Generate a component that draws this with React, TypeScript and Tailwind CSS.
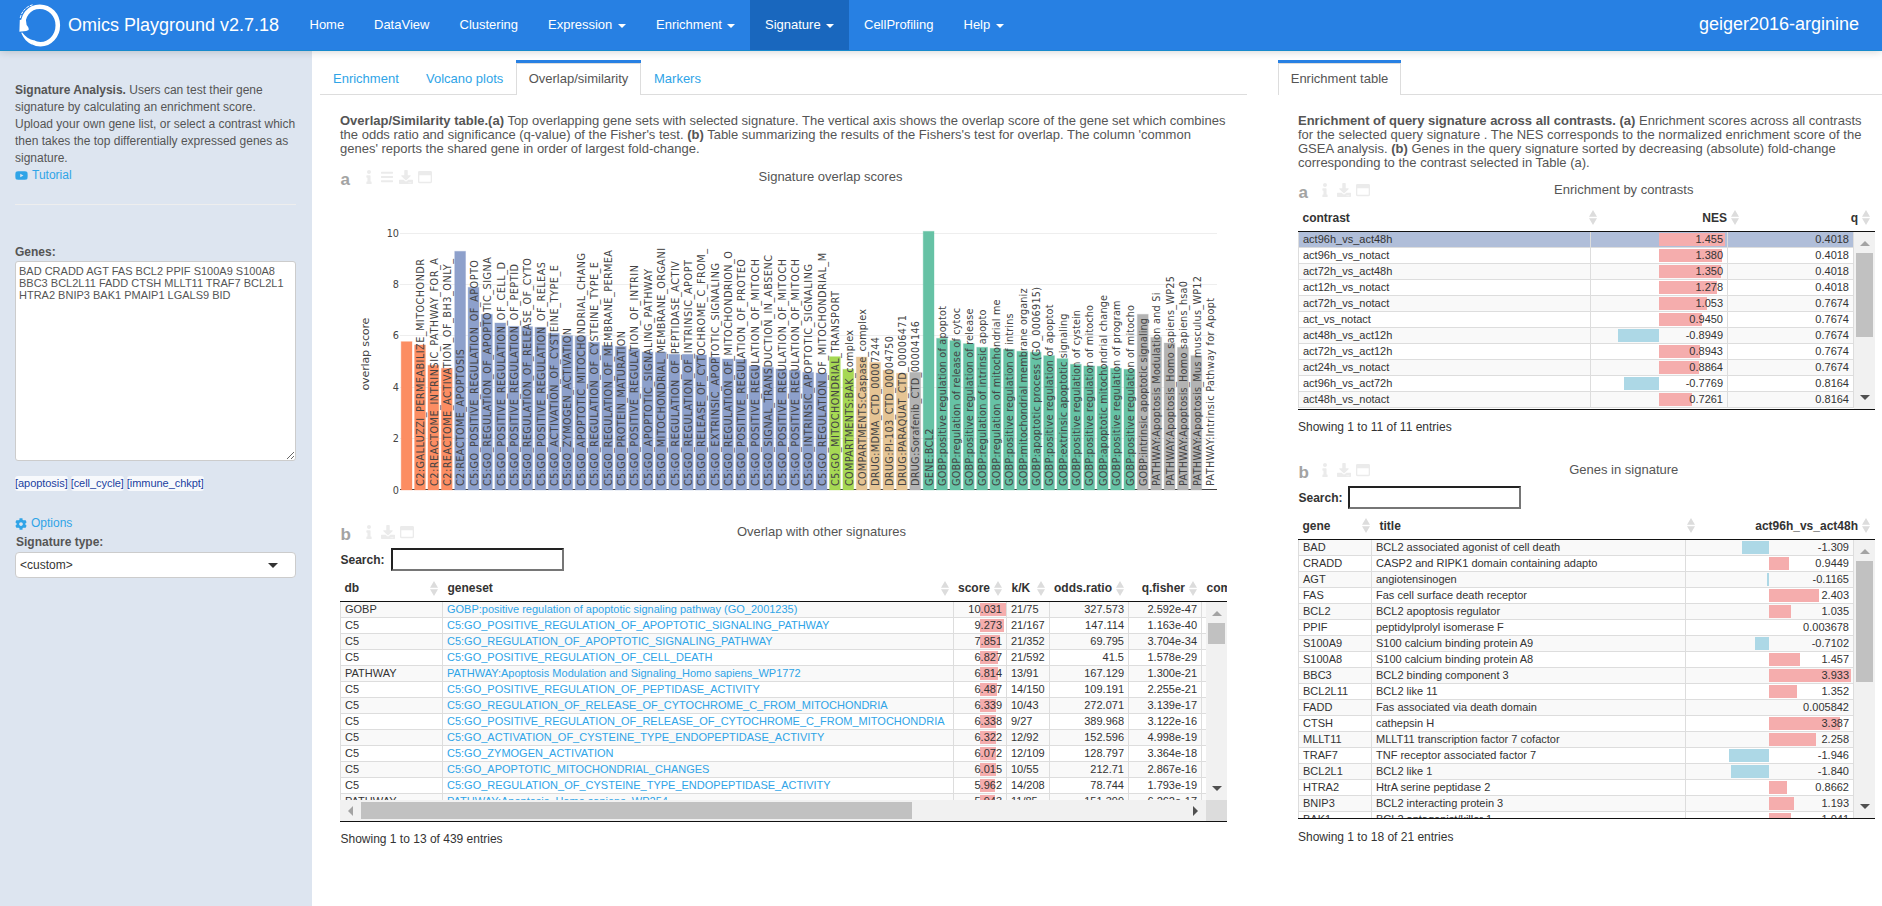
import React from "react";
import { FaBars, FaCog, FaDownload, FaInfo, FaRegWindowMaximize, FaYoutube } from "react-icons/fa";

/* ---------- navigation ---------- */

type NavItem = { label: string; width: string; caret?: boolean; active?: boolean };

const NAV: NavItem[] = [
  { label: "Home", width: "w-[64.5px]" },
  { label: "DataView", width: "w-[85.5px]" },
  { label: "Clustering", width: "w-[88.5px]" },
  { label: "Expression", width: "w-[108px]", caret: true },
  { label: "Enrichment", width: "w-[109px]", caret: true },
  { label: "Signature", width: "w-[99px]", caret: true, active: true },
  { label: "CellProfiling", width: "w-[99.5px]" },
  { label: "Help", width: "w-[70px]", caret: true },
];

function Caret({ className }: { className?: string }) {
  return (
    <svg width="8" height="4" viewBox="0 0 8 4" className={className}>
      <path d="M0 0h8L4 4z" fill="currentColor" />
    </svg>
  );
}

function Logo() {
  return (
    <svg width="43" height="43" viewBox="0 0 43 43" className="shrink-0 text-white">
      <path
        d="M4.500 24C2.500 12 10 2.700 20.800 2.700C31 2.700 38.800 11 38.800 21.300C38.800 32 31 40.200 21.500 40.200C18.500 40.200 16 39.500 13.800 38.300"
        fill="none"
        stroke="currentColor"
        strokeWidth="4.600"
      />
      <path d="M.8 16L.4 27.800C3 27.300 6.500 27.600 9.600 26C10.200 24.500 9 22.500 7.600 21L6.800 15z" fill="currentColor" />
      <path d="M2.200 28.800C4.500 34.500 8.500 39 13 40.600L15.500 36.500C10.500 35.500 6 32.500 3.200 28.500z" fill="currentColor" />
      <path d="M1.200 14C2.600 7 8 1.800 14.500.6" fill="none" stroke="currentColor" strokeWidth="1" strokeDasharray="3 1" />
    </svg>
  );
}

function TopBar() {
  return (
    <header className="relative z-10 flex h-[51px] items-stretch border-b border-[#178acc] bg-[#2780e3] text-white shadow-[0_0_9px_rgba(0,0,0,0.2)]">
      <div className="flex w-[294.500px] items-center pl-[19px] text-[18px]">
        <Logo />
        <span className="ml-[6px]">Omics Playground v2.7.18</span>
      </div>
      <nav className="flex text-[13px]">
        {NAV.map((n) => (
          <a
            key={n.label}
            className={`flex shrink-0 items-center justify-between px-[15px] pb-px ${n.width} ${n.active ? "bg-[#1967be]" : ""}`}
          >
            {n.label}
            {n.caret && <Caret className="mt-[2px]" />}
          </a>
        ))}
      </nav>
      <div className="ml-auto flex items-center pr-[23px] pb-[2px] text-[18px]">geiger2016-arginine</div>
    </header>
  );
}

/* ---------- sidebar ---------- */

function Sidebar() {
  return (
    <aside className="flex w-[312px] shrink-0 flex-col bg-[#dde5f0] px-[15px] pt-[31px] text-[12px] leading-[17px] text-[#555]">
      <p className="h-[85px] w-[281px]">
        <b>Signature Analysis.</b> Users can test their gene signature by calculating an enrichment score. Upload your
        own gene list, or select a contrast which then takes the top differentially expressed genes as signature.
      </p>
      <a className="flex items-center gap-[4px] text-[#2fa4e7]">
        <FaYoutube size={13} />
        Tutorial
      </a>
      <hr className="mt-[20px] w-[281px] border-[#eee]" />
      <label className="mt-[38px] block h-[18px] font-bold leading-[18px]">Genes:</label>
      <textarea
        readOnly
        className="block h-[200px] w-[281px] resize rounded-[3px] border border-[#ccc] bg-white px-[3px] py-[3px] text-[11px] leading-[12px] text-[#555] outline-none"
        value="BAD CRADD AGT FAS BCL2 PPIF S100A9 S100A8 BBC3 BCL2L11 FADD CTSH MLLT11 TRAF7 BCL2L1 HTRA2 BNIP3 BAK1 PMAIP1 LGALS9 BID"
      />
      <div className="mt-[15px] flex gap-[3px] text-[11px] leading-[15px] text-[#1a3fa0]">
        {["[apoptosis]", "[cell_cycle]", "[immune_chkpt]"].map((t) => (
          <a key={t} className="rounded-[3px] bg-[#f7f9fc] tracking-[-0.05px]">
            {t}
          </a>
        ))}
      </div>
      <a className="mt-[24px] flex items-center gap-[4px] text-[#2fa4e7]">
        <FaCog size={12} />
        Options
      </a>
      <label className="block h-[20px] pl-px font-bold leading-[20px]">Signature type:</label>
      <div className="flex h-[26px] w-[281px] items-center justify-between rounded-[4px] border border-[#ccc] bg-white pr-[17px] pl-[4px] text-[#333]">
        {"<custom>"}
        <svg width="10" height="5" viewBox="0 0 10 5">
          <path d="M0 0h10L5 5z" fill="#333" />
        </svg>
      </div>
    </aside>
  );
}

/* ---------- shared pieces ---------- */

function PanelBar({ letter, title, menu, narrow }: { letter: string; title: string; menu?: boolean; narrow?: boolean }) {
  return (
    <div className="flex h-[28px] items-center">
      <span className={`pt-[6px] pl-[0.500px] text-[17px] font-bold leading-[20px] text-[#a3a3a3] ${narrow ? "w-[24px]" : "w-[25.500px]"}`}>
        {letter}
      </span>
      <div className="flex items-center text-[#ebebeb]">
        <span className="w-[15px]">
          <FaInfo size={14} className="w-[6px]" />
        </span>
        {menu && (
          <span className="w-[18px]">
            <FaBars size={14} className="w-[12px]" />
          </span>
        )}
        <span className="w-[19px]">
          <FaDownload size={14} />
        </span>
        <FaRegWindowMaximize size={14} />
      </div>
      <h3 className="flex-1 pl-[2.500px] text-center text-[13px] text-[#555]">{title}</h3>
    </div>
  );
}

function Search({ narrow }: { narrow?: boolean }) {
  return (
    <label className="flex h-[23px] items-center text-[12px] font-bold text-[#333]">
      <span className={`pl-[0.500px] ${narrow ? "w-[50px]" : "w-[51px]"}`}>Search:</span>
      <span className="block h-[23px] w-[173px] border-2 border-t-[#222] border-r-[#767676] border-b-[#767676] border-l-[#222] bg-white" />
    </label>
  );
}

function Sorter() {
  return (
    <svg width="8" height="15" viewBox="0 0 8 15" className="shrink-0">
      <path d="M4 0l4 6.700H0zM4 15L0 8.300h8z" fill="#dcdcdc" />
    </svg>
  );
}

function Th({ label, width, right, sort = true }: { label: string; width: string; right?: boolean; sort?: boolean }) {
  return (
    <div
      className={`flex shrink-0 items-center ${right ? "" : "pl-[4.500px]"} ${sort ? "pr-[5.500px]" : ""} ${width} ${right ? "justify-end gap-[3.500px]" : "justify-between"}`}
    >
      {label}
      {sort && <Sorter />}
    </div>
  );
}

function VScroll({ thumb, corner }: { thumb: string; corner?: boolean }) {
  return (
    <div className={`flex w-[21px] shrink-0 flex-col items-center bg-[#f1f1f1] ${corner ? "h-[198px]" : "h-full"}`}>
      <svg width="10" height="5" viewBox="0 0 10 5" className="mt-[9px] shrink-0">
        <path d="M0 5h10L5 0z" fill="#a3a3a3" />
      </svg>
      <div className={`mt-[7px] w-[17px] shrink-0 bg-[#c1c1c1] ${thumb}`} />
      <svg width="10" height="5" viewBox="0 0 10 5" className="mt-auto mb-[9px] shrink-0">
        <path d="M0 0h10L5 5z" fill="#505050" />
      </svg>
    </div>
  );
}

const PINK = "#f5adad";
const BLUE = "#add8e6";

function Bar({ value, half, scale }: { value: number; half: number; scale: number }) {
  const len = Math.abs(value) * scale;
  const neg = value < 0;
  return (
    <span
      className="absolute top-px h-[13px]"
      style={{ left: neg ? half - len : half, width: len, background: neg ? BLUE : PINK }}
    />
  );
}

const CELL = "relative h-full shrink-0 overflow-hidden border-r border-[#ddd] px-[4px] whitespace-nowrap";

/* ---------- bar chart ---------- */

type ChartBar = { h: number; c: string };
const OR = "#fc8d62";
const BL = "#8da0cb";
const GN = "#a6d854";
const TN = "#e5c494";
const GY = "#b3b3b3";
const TL = "#66c2a5";

const group = (c: string, tops: number[]): ChartBar[] => tops.map((t) => ({ h: (990 - t) / 3, c }));

const BARS: ChartBar[] = [
  ...group(OR, [545, 555, 616, 625]),
  ...group(BL, [274, 382, 463, 489, 499, 500, 502, 520, 527, 529, 547, 557, 559, 568]),
  ...group(BL, [576, 577, 583, 583, 585, 592, 597, 598, 618, 622, 627, 631, 637, 639]),
  ...group(GN, [590, 628]),
  ...group(TN, [591, 607, 631, 640]),
  ...group(GY, [637]),
  ...group(TL, [214, 535, 542, 551, 562, 565, 568, 574, 577, 587, 596, 613, 618, 619, 625, 628]),
  ...group(GY, [463, 532, 549, 562, 587]),
];

const LABELS: [string, number][] = [
  ["C2:GALLUZZI_PERMEABILIZE_MITOCHONDR", 227],
  ["C2:REACTOME_INTRINSIC_PATHWAY_FOR_A", 228],
  ["C2:REACTOME_ACTIVATION_OF_BH3_ONLY_", 227],
  ["C2:REACTOME_APOPTOSIS", 137],
  ["C5:GO_POSITIVE_REGULATION_OF_APOPTO", 226],
  ["C5:GO_REGULATION_OF_APOPTOTIC_SIGNA", 229],
  ["C5:GO_POSITIVE_REGULATION_OF_CELL_D", 224],
  ["C5:GO_POSITIVE_REGULATION_OF_PEPTID", 222],
  ["C5:GO_REGULATION_OF_RELEASE_OF_CYTO", 228],
  ["C5:GO_POSITIVE_REGULATION_OF_RELEAS", 224],
  ["C5:GO_ACTIVATION_OF_CYSTEINE_TYPE_E", 221],
  ["C5:GO_ZYMOGEN_ACTIVATION", 158],
  ["C5:GO_APOPTOTIC_MITOCHONDRIAL_CHANG", 233],
  ["C5:GO_REGULATION_OF_CYSTEINE_TYPE_E", 224],
  ["C5:GO_REGULATION_OF_MEMBRANE_PERMEA", 236],
  ["C5:GO_PROTEIN_MATURATION", 155],
  ["C5:GO_POSITIVE_REGULATION_OF_INTRIN", 221],
  ["C5:GO_APOPTOTIC_SIGNALING_PATHWAY", 217],
  ["C5:GO_MITOCHONDRIAL_MEMBRANE_ORGANI", 238],
  ["C5:GO_REGULATION_OF_PEPTIDASE_ACTIV", 225],
  ["C5:GO_REGULATION_OF_INTRINSIC_APOPT", 226],
  ["C5:GO_RELEASE_OF_CYTOCHROME_C_FROM_", 237],
  ["C5:GO_EXTRINSIC_APOPTOTIC_SIGNALING", 223],
  ["C5:GO_REGULATION_OF_MITOCHONDRION_O", 235],
  ["C5:GO_POSITIVE_REGULATION_OF_PROTEO", 227],
  ["C5:GO_POSITIVE_REGULATION_OF_MITOCH", 227],
  ["C5:GO_SIGNAL_TRANSDUCTION_IN_ABSENC", 231],
  ["C5:GO_POSITIVE_REGULATION_OF_MITOCH", 227],
  ["C5:GO_POSITIVE_REGULATION_OF_MITOCH", 227],
  ["C5:GO_INTRINSIC_APOPTOTIC_SIGNALING", 222],
  ["C5:GO_REGULATION_OF_MITOCHONDRIAL_M", 233],
  ["C5:GO_MITOCHONDRIAL_TRANSPORT", 195],
  ["COMPARTMENTS:BAK_complex", 156],
  ["COMPARTMENTS:Caspase_complex", 177],
  ["DRUG:MDMA_CTD_00007244", 149],
  ["DRUG:PI-103_CTD_00004750", 150],
  ["DRUG:PARAQUAT_CTD_00006471", 171],
  ["DRUG:Sorafenib_CTD_00004146", 165],
  ["GENE:BCL2", 57.5],
  ["GOBP:positive regulation of apoptot", 180],
  ["GOBP:regulation of release of cytoc", 178],
  ["GOBP:positive regulation of release", 177.5],
  ["GOBP:regulation of intrinsic apopto", 176.5],
  ["GOBP:regulation of mitochondrial me", 186.5],
  ["GOBP:positive regulation of intrins", 172.5],
  ["GOBP:mitochondrial membrane organiz", 197.5],
  ["GOBP:apoptotic process (GO_0006915)", 199],
  ["GOBP:positive regulation of apoptot", 181.5],
  ["GOBP:extrinsic apoptotic signaling", 172.5],
  ["GOBP:positive regulation of cystein", 176],
  ["GOBP:positive regulation of mitocho", 181],
  ["GOBP:apoptotic mitochondrial change", 191],
  ["GOBP:positive regulation of program", 185.5],
  ["GOBP:positive regulation of mitocho", 181],
  ["GOBP:intrinsic apoptotic signaling", 168],
  ["PATHWAY:Apoptosis Modulation and Si", 193.5],
  ["PATHWAY:Apoptosis_Homo sapiens_WP25", 210],
  ["PATHWAY:Apoptosis_Homo sapiens_hsa0", 205],
  ["PATHWAY:Apoptosis_Mus musculus_WP12", 210],
  ["PATHWAY:Intrinsic Pathway for Apopt", 188],
];

const PITCH = 13.385;
const BASE = 490;

function OverlapChart() {
  return (
    <svg width="887" height="327" viewBox="340 191 887 327" className="block" fontFamily='"DejaVu Sans", sans-serif' fill="#444">
      {[2, 4, 6, 8, 10].map((v) => (
        <line key={v} x1="400" x2="1217" y1={Math.round(489.5 - v * 25.7) + 0.5} y2={Math.round(489.5 - v * 25.7) + 0.5} stroke="#eee" />
      ))}
      <line x1="400" x2="1217" y1="489.500" y2="489.500" stroke="#444" />
      {BARS.map((b, i) => (
        <rect key={i} x={401.2 + i * PITCH} y={BASE - b.h} width="10.800" height={b.h} fill={b.c} stroke={b.c} strokeOpacity="0.350" />
      ))}
      {LABELS.map(([t, len], i) => (
        <text
          key={i}
          transform={`translate(${424.2 + i * PITCH} 486) rotate(-90)`}
          fontSize="9.700"
          textLength={len}
          lengthAdjust="spacing"
        >
          {t}
        </text>
      ))}
      {[0, 2, 4, 6, 8, 10].map((v) => (
        <text key={v} x="399" y={493.5 - v * 25.7} fontSize="9.700" textAnchor="end">
          {v}
        </text>
      ))}
      <text transform="translate(368.500 390.500) rotate(-90)" fontSize="11.200" textLength="73" lengthAdjust="spacing">
        overlap score
      </text>
    </svg>
  );
}

/* ---------- left table ---------- */

const SETS: [string, string, number, string, string, string][] = [
  ["GOBP", "GOBP:positive regulation of apoptotic signaling pathway (GO_2001235)", 10.031, "21/75", "327.573", "2.592e-47"],
  ["C5", "C5:GO_POSITIVE_REGULATION_OF_APOPTOTIC_SIGNALING_PATHWAY", 9.273, "21/167", "147.114", "1.163e-40"],
  ["C5", "C5:GO_REGULATION_OF_APOPTOTIC_SIGNALING_PATHWAY", 7.851, "21/352", "69.795", "3.704e-34"],
  ["C5", "C5:GO_POSITIVE_REGULATION_OF_CELL_DEATH", 6.827, "21/592", "41.5", "1.578e-29"],
  ["PATHWAY", "PATHWAY:Apoptosis Modulation and Signaling_Homo sapiens_WP1772", 6.814, "13/91", "167.129", "1.300e-21"],
  ["C5", "C5:GO_POSITIVE_REGULATION_OF_PEPTIDASE_ACTIVITY", 6.487, "14/150", "109.191", "2.255e-21"],
  ["C5", "C5:GO_REGULATION_OF_RELEASE_OF_CYTOCHROME_C_FROM_MITOCHONDRIA", 6.339, "10/43", "272.071", "3.139e-17"],
  ["C5", "C5:GO_POSITIVE_REGULATION_OF_RELEASE_OF_CYTOCHROME_C_FROM_MITOCHONDRIA", 6.338, "9/27", "389.968", "3.122e-16"],
  ["C5", "C5:GO_ACTIVATION_OF_CYSTEINE_TYPE_ENDOPEPTIDASE_ACTIVITY", 6.322, "12/92", "152.596", "4.998e-19"],
  ["C5", "C5:GO_ZYMOGEN_ACTIVATION", 6.072, "12/109", "128.797", "3.364e-18"],
  ["C5", "C5:GO_APOPTOTIC_MITOCHONDRIAL_CHANGES", 6.015, "10/55", "212.71", "2.867e-16"],
  ["C5", "C5:GO_REGULATION_OF_CYSTEINE_TYPE_ENDOPEPTIDASE_ACTIVITY", 5.962, "14/208", "78.744", "1.793e-19"],
  ["PATHWAY", "PATHWAY:Apoptosis_Homo sapiens_WP254", 5.943, "11/85", "151.399", "6.262e-17"],
];

function OverlapTable() {
  return (
    <div className="w-[887px] text-[#333]">
      <div className="flex h-[31px] overflow-hidden border-b border-[#111] pt-[4px] text-[12px] font-bold">
        <Th label="db" width="w-[103px]" />
        <Th label="geneset" width="w-[511px]" />
        <Th label="score" width="w-[53px]" right />
        <Th label="k/K" width="w-[43px]" />
        <Th label="odds.ratio" width="w-[79px]" right />
        <Th label="q.fisher" width="w-[73px]" right />
        <Th label="common.genes" width="w-[90px]" sort={false} />
      </div>
      <div className="flex h-[198px] overflow-hidden">
        <div className="w-[866px] overflow-hidden border-l border-[#ddd] text-[11px] leading-[15px]">
          {SETS.map((r, i) => (
            <div key={i} className={`flex h-[16px] border-b border-[#ddd] ${i % 2 ? "bg-white" : "bg-[#f9f9f9]"}`}>
              <div className={`${CELL} w-[102px]`}>{r[0]}</div>
              <div className={`${CELL} w-[511px] text-[#2fa4e7]`}>{r[1]}</div>
              <div className={`${CELL} w-[53px] text-right`}>
                <Bar value={r[2]} half={26} scale={2.592} />
                <span className="relative">{r[2].toFixed(3)}</span>
              </div>
              <div className={`${CELL} w-[43px]`}>{r[3]}</div>
              <div className={`${CELL} w-[79px] text-right`}>{r[4]}</div>
              <div className={`${CELL} w-[73px] text-right`}>{r[5]}</div>
            </div>
          ))}
        </div>
        <VScroll thumb="h-[21px]" corner />
      </div>
      <div className="flex h-[22px] items-stretch border-b border-[#111]">
        <div className="flex flex-1 items-center bg-[#f1f1f1]">
          <svg width="5" height="10" viewBox="0 0 5 10" className="ml-[8px]">
            <path d="M5 0v10L0 5z" fill="#a3a3a3" />
          </svg>
          <div className="ml-[8px] h-[17px] w-[551px] bg-[#c1c1c1]" />
          <svg width="5" height="10" viewBox="0 0 5 10" className="mr-[8px] ml-auto">
            <path d="M0 0v10L5 5z" fill="#505050" />
          </svg>
        </div>
        <div className="w-[21px] bg-[#dcdcdc]" />
      </div>
      <p className="pt-[8px] pl-[0.500px] text-[12px] leading-[18px]">Showing 1 to 13 of 439 entries</p>
    </div>
  );
}

/* ---------- right tables ---------- */

const CONTRASTS: [string, string, string][] = [
  ["act96h_vs_act48h", "1.455", "0.4018"],
  ["act96h_vs_notact", "1.380", "0.4018"],
  ["act72h_vs_act48h", "1.350", "0.4018"],
  ["act12h_vs_notact", "1.278", "0.4018"],
  ["act72h_vs_notact", "1.053", "0.7674"],
  ["act_vs_notact", "0.9450", "0.7674"],
  ["act48h_vs_act12h", "-0.8949", "0.7674"],
  ["act72h_vs_act12h", "0.8943", "0.7674"],
  ["act24h_vs_notact", "0.8864", "0.7674"],
  ["act96h_vs_act72h", "-0.7769", "0.8164"],
  ["act48h_vs_notact", "0.7261", "0.8164"],
];

function ContrastTable() {
  return (
    <div className="w-[577px] text-[#333]">
      <div className="flex h-[28px] border-b border-[#111] text-[12px] font-bold">
        <Th label="contrast" width="w-[304px]" />
        <Th label="NES" width="w-[142px]" right />
        <Th label="q" width="w-[131px]" right />
      </div>
      <div className="flex h-[178px] border-b border-[#111]">
        <div className="h-[176px] w-[556px] overflow-hidden border-l border-[#ddd] text-[11px] leading-[15px]">
          {CONTRASTS.map((r, i) => (
            <div
              key={r[0]}
              className={`flex h-[16px] border-b border-[#ddd] ${i === 0 ? "bg-[#b0bed9]" : i % 2 ? "bg-white" : "bg-[#f9f9f9]"}`}
            >
              <div className={`${CELL} w-[292px]`}>{r[0]}</div>
              <div className={`${CELL} w-[137px] text-right`}>
                <Bar value={Number(r[1])} half={68} scale={45.6} />
                <span className="relative">{r[1]}</span>
              </div>
              <div className={`${CELL} w-[126px] text-right`}>{r[2]}</div>
            </div>
          ))}
        </div>
        <VScroll thumb="h-[84px]" />
      </div>
      <p className="pt-[8px] text-[12px] leading-[18px]">Showing 1 to 11 of 11 entries</p>
    </div>
  );
}

const GENES: [string, string, string][] = [
  ["BAD", "BCL2 associated agonist of cell death", "-1.309"],
  ["CRADD", "CASP2 and RIPK1 domain containing adapto", "0.9449"],
  ["AGT", "angiotensinogen", "-0.1165"],
  ["FAS", "Fas cell surface death receptor", "2.403"],
  ["BCL2", "BCL2 apoptosis regulator", "1.035"],
  ["PPIF", "peptidylprolyl isomerase F", "0.003678"],
  ["S100A9", "S100 calcium binding protein A9", "-0.7102"],
  ["S100A8", "S100 calcium binding protein A8", "1.457"],
  ["BBC3", "BCL2 binding component 3", "3.933"],
  ["BCL2L11", "BCL2 like 11", "1.352"],
  ["FADD", "Fas associated via death domain", "0.005842"],
  ["CTSH", "cathepsin H", "3.387"],
  ["MLLT11", "MLLT11 transcription factor 7 cofactor", "2.258"],
  ["TRAF7", "TNF receptor associated factor 7", "-1.946"],
  ["BCL2L1", "BCL2 like 1", "-1.840"],
  ["HTRA2", "HtrA serine peptidase 2", "0.8662"],
  ["BNIP3", "BCL2 interacting protein 3", "1.193"],
  ["BAK1", "BCL2 antagonist/killer 1", "1.041"],
];

function GeneTable() {
  return (
    <div className="w-[577px] text-[#333]">
      <div className="flex h-[31px] border-b border-[#111] pt-[3px] text-[12px] font-bold">
        <Th label="gene" width="w-[77px]" />
        <Th label="title" width="w-[325px]" />
        <Th label="act96h_vs_act48h" width="w-[175px]" right />
      </div>
      <div className="flex h-[279px] border-b border-[#111]">
        <div className="w-[556px] overflow-hidden border-l border-[#ddd] text-[11px] leading-[15px]">
          {GENES.map((r, i) => (
            <div key={r[0]} className={`flex h-[16px] border-b border-[#ddd] ${i % 2 ? "bg-white" : "bg-[#f9f9f9]"}`}>
              <div className={`${CELL} w-[73px]`}>{r[0]}</div>
              <div className={`${CELL} w-[314px]`}>{r[1]}</div>
              <div className={`${CELL} w-[168px] text-right`}>
                {Math.abs(Number(r[2])) > 0.01 && <Bar value={Number(r[2])} half={83.3} scale={20.8} />}
                <span className="relative">{r[2]}</span>
              </div>
            </div>
          ))}
        </div>
        <VScroll thumb="h-[121px]" />
      </div>
      <p className="pt-[9px] text-[12px] leading-[18px]">Showing 1 to 18 of 21 entries</p>
    </div>
  );
}

/* ---------- page ---------- */

const TAB_ACTIVE = "flex h-[35px] shrink-0 flex-col border-t-[3px] border-[#2780e3] bg-white";
const TAB_INNER = "flex flex-1 items-center justify-center border border-b-0 border-[#ddd] pb-[2px] text-[#555]";
const TAB_LINK = "shrink-0 border-b border-[#ddd] pt-[3px] leading-[31px] text-[#2fa4e7]";

export default function App() {
  return (
    <div className="flex h-[906px] w-[1882px] flex-col overflow-hidden bg-white font-['Liberation_Sans',Arial,sans-serif]">
      <TopBar />
      <div className="flex flex-1">
        <Sidebar />

        <main className="ml-[8px] w-[927px] shrink-0 pt-[9px]">
          <div className="flex h-[35px] text-[13px]">
            <a className={`${TAB_LINK} w-[106px] pl-[13px]`}>Enrichment</a>
            <a className={`${TAB_LINK} w-[90px]`}>Volcano plots</a>
            <div className={`${TAB_ACTIVE} w-[125px]`}>
              <div className={TAB_INNER}>Overlap/similarity</div>
            </div>
            <a className={`${TAB_LINK} flex-1 pl-[13px]`}>Markers</a>
          </div>
          <section className="pt-[19px] pl-[20px]">
            <p className="h-[49px] w-[892px] text-[13px] leading-[14px] text-[#555]">
              <b>Overlap/Similarity table.(a)</b> Top overlapping gene sets with selected signature. The vertical axis
              shows the overlap score of the gene set which combines the odds ratio and significance (q-value) of the
              Fisher's test. <b>(b)</b> Table summarizing the results of the Fishers's test for overlap. The column
              'common genes' reports the shared gene in order of largest fold-change.
            </p>
            <div className="w-[887px]">
              <PanelBar letter="a" title="Signature overlap scores" menu />
              <OverlapChart />
              <PanelBar letter="b" title="Overlap with other signatures" />
              <div className="pt-[2px]">
                <Search />
              </div>
              <OverlapTable />
            </div>
          </section>
        </main>

        <main className="ml-[31px] flex-1 pt-[9px]">
          <div className="flex h-[35px] text-[13px]">
            <div className={`${TAB_ACTIVE} w-[123px]`}>
              <div className={TAB_INNER}>Enrichment table</div>
            </div>
            <div className="flex-1 border-b border-[#ddd]" />
          </div>
          <section className="pt-[19px] pl-[20px]">
            <p className="h-[62px] w-[580px] text-[13px] leading-[14px] whitespace-nowrap text-[#555]">
              <b>Enrichment of query signature across all contrasts. (a)</b> Enrichment scores across all contrasts
              <br />
              for the selected query signature . The NES corresponds to the normalized enrichment score of the
              <br />
              GSEA analysis. <b>(b)</b> Genes in the query signature sorted by decreasing (absolute) fold-change
              <br />
              corresponding to the contrast selected in Table (a).
            </p>
            <div className="w-[577px]">
              <PanelBar letter="a" title="Enrichment by contrasts" narrow />
              <ContrastTable />
              <div className="h-[20px]" />
              <PanelBar letter="b" title="Genes in signature" narrow />
              <div className="pt-[2px]">
                <Search narrow />
              </div>
              <GeneTable />
            </div>
          </section>
        </main>
      </div>
    </div>
  );
}
